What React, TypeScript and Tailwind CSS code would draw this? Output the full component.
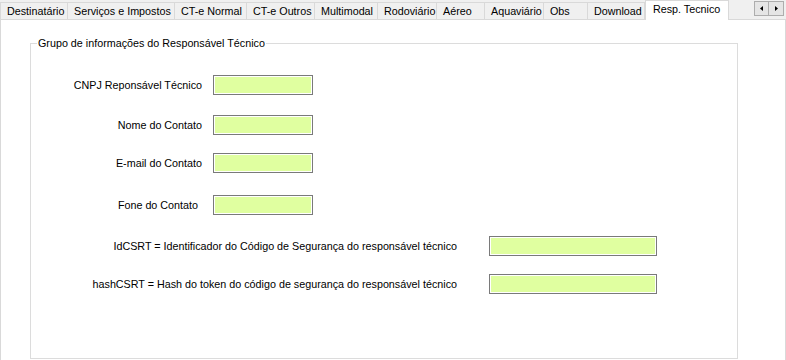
const tabs = [
  { label: 'Destinatário', w: 'w-[68px]' },
  { label: 'Serviços e Impostos', w: 'w-[107px]' },
  { label: 'CT-e Normal', w: 'w-[72px]' },
  { label: 'CT-e Outros', w: 'w-[68px]' },
  { label: 'Multimodal', w: 'w-[63px]' },
  { label: 'Rodoviário', w: 'w-[59px]' },
  { label: 'Aéreo', w: 'w-[48px]' },
  { label: 'Aquaviário', w: 'w-[59px]' },
  { label: 'Obs', w: 'w-[44px]' },
  { label: 'Download', w: 'w-[57px]' },
];

const shortFields = [
  { label: 'CNPJ Reponsável Técnico', mt: 'mt-[25px]', pr: '' },
  { label: 'Nome do Contato', mt: 'mt-[20px]', pr: '' },
  { label: 'E-mail do Contato', mt: 'mt-[18px]', pr: '' },
  { label: 'Fone do Contato', mt: 'mt-[22px]', pr: 'pr-[4px]' },
];

const longFields = [
  { label: 'IdCSRT = Identificador do Código de Segurança do responsável técnico', mt: 'mt-[21px]' },
  { label: 'hashCSRT = Hash do token do código de segurança do responsável técnico', mt: 'mt-[18px]' },
];

function Field({ wide }: { wide?: boolean }) {
  return (
    <div
      className={`${wide ? 'w-[168px]' : 'w-[100px]'} h-[20px] border border-[#7a7a7a] bg-[#e0ffa0] shadow-[inset_0_0_0_1px_#ffffff]`}
    />
  );
}

export default function App() {
  return (
    <div
      className="w-[786px] h-[360px] bg-[#f0f0f0] overflow-hidden text-[10.75px] leading-[13px] text-black"
      style={{ fontFamily: '"Liberation Sans", Arial, sans-serif' }}
    >
      <div className="flex items-end h-[19px]">
        {tabs.map((t, i) => (
          <div
            key={t.label}
            className={`${t.w} h-[17px] pl-[6px] pt-[2px] whitespace-nowrap bg-[#f0f0f0] border-t border-r border-[#d9d9d9] ${i === 0 ? 'border-l' : ''}`}
          >
            {t.label}
          </div>
        ))}
        <div className="w-[84px] h-[20px] -mb-px relative pl-[7px] pt-[2px] whitespace-nowrap bg-white border-t border-x border-[#d9d9d9]">
          Resp. Tecnico
        </div>
        <div className="ml-auto mr-[2px] self-start mt-[1px] flex">
          <div className="w-[15px] h-[15px] border border-[#adadad] bg-[#e5e5e5] flex items-center justify-center">
            <svg width="3" height="5" viewBox="0 0 3 5">
              <path d="M3 0 L0 2.5 L3 5 Z" fill="#000" />
            </svg>
          </div>
          <div className="w-[15px] h-[15px] border border-l-0 border-[#adadad] bg-[#e5e5e5] flex items-center justify-center">
            <svg width="3" height="5" viewBox="0 0 3 5">
              <path d="M0 0 L3 2.5 L0 5 Z" fill="#000" />
            </svg>
          </div>
        </div>
      </div>

      <div className="h-[341px] bg-white border-t border-x border-[#d9d9d9] pt-[17px]">
        <fieldset className="ml-[29px] w-[708px] h-[322px] border border-[#dcdcdc] p-0">
          <legend className="ml-[6px] px-px">Grupo de informações do Responsável Técnico</legend>
          {shortFields.map(f => (
            <div key={f.label} className={`flex items-center ${f.mt}`}>
              <div className={`w-[171px] text-right whitespace-nowrap ${f.pr}`}>{f.label}</div>
              <div className="ml-[11px]">
                <Field />
              </div>
            </div>
          ))}
          {longFields.map(f => (
            <div key={f.label} className={`flex items-center ${f.mt}`}>
              <div className="w-[426px] text-right whitespace-nowrap">{f.label}</div>
              <div className="ml-[32px]">
                <Field wide />
              </div>
            </div>
          ))}
        </fieldset>
      </div>
    </div>
  );
}
